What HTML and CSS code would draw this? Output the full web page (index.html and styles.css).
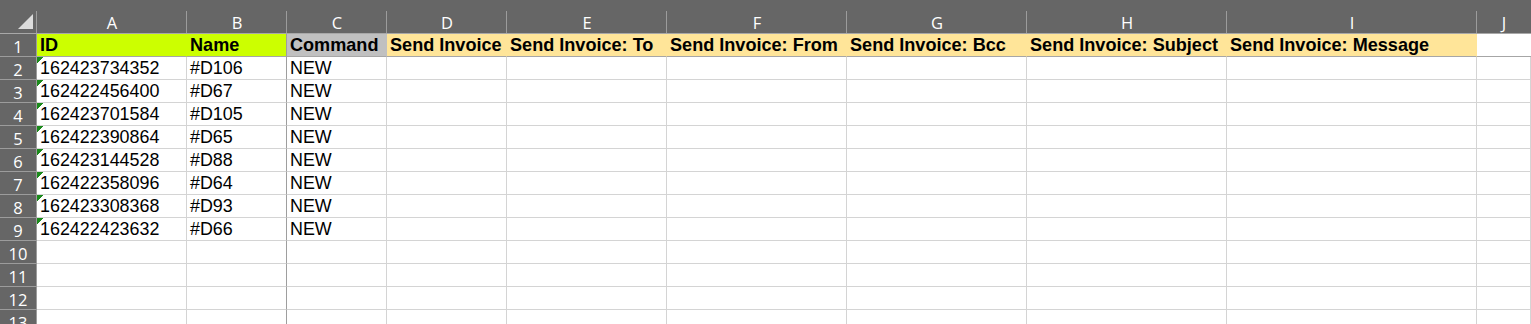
FILE: index.html
```html
<!DOCTYPE html>
<html>
<head>
<meta charset="utf-8">
<link rel="stylesheet" href="styles.css">
</head>
<body>
<div class="sheet">
  <div class="ch corner"><svg class="tri" width="16" height="16" viewBox="0 0 16 16"><polygon points="15,0 15,15 0,15" fill="#dcdcdc"/></svg></div>
  <div class="ch">A</div><div class="ch">B</div><div class="ch">C</div><div class="ch">D</div><div class="ch">E</div><div class="ch">F</div><div class="ch">G</div><div class="ch">H</div><div class="ch">I</div><div class="ch last">J</div>

  <div class="rh">1</div>
  <div class="c r1 b lime">ID</div><div class="c r1 b lime frz">Name</div><div class="c r1 b grey">Command</div>
  <div class="c r1 b tan">Send Invoice</div><div class="c r1 b tan">Send Invoice: To</div><div class="c r1 b tan">Send Invoice: From</div><div class="c r1 b tan">Send Invoice: Bcc</div><div class="c r1 b tan">Send Invoice: Subject</div><div class="c r1 b tan">Send Invoice: Message</div><div class="c r1 nr"></div>

  <div class="rh">2</div><div class="c flag">162423734352</div><div class="c frz">#D106</div><div class="c">NEW</div><div class="c"></div><div class="c"></div><div class="c"></div><div class="c"></div><div class="c"></div><div class="c"></div><div class="c"></div>
  <div class="rh">3</div><div class="c flag">162422456400</div><div class="c frz">#D67</div><div class="c">NEW</div><div class="c"></div><div class="c"></div><div class="c"></div><div class="c"></div><div class="c"></div><div class="c"></div><div class="c"></div>
  <div class="rh">4</div><div class="c flag">162423701584</div><div class="c frz">#D105</div><div class="c">NEW</div><div class="c"></div><div class="c"></div><div class="c"></div><div class="c"></div><div class="c"></div><div class="c"></div><div class="c"></div>
  <div class="rh">5</div><div class="c flag">162422390864</div><div class="c frz">#D65</div><div class="c">NEW</div><div class="c"></div><div class="c"></div><div class="c"></div><div class="c"></div><div class="c"></div><div class="c"></div><div class="c"></div>
  <div class="rh">6</div><div class="c flag">162423144528</div><div class="c frz">#D88</div><div class="c">NEW</div><div class="c"></div><div class="c"></div><div class="c"></div><div class="c"></div><div class="c"></div><div class="c"></div><div class="c"></div>
  <div class="rh">7</div><div class="c flag">162422358096</div><div class="c frz">#D64</div><div class="c">NEW</div><div class="c"></div><div class="c"></div><div class="c"></div><div class="c"></div><div class="c"></div><div class="c"></div><div class="c"></div>
  <div class="rh">8</div><div class="c flag">162423308368</div><div class="c frz">#D93</div><div class="c">NEW</div><div class="c"></div><div class="c"></div><div class="c"></div><div class="c"></div><div class="c"></div><div class="c"></div><div class="c"></div>
  <div class="rh">9</div><div class="c flag">162422423632</div><div class="c frz">#D66</div><div class="c">NEW</div><div class="c"></div><div class="c"></div><div class="c"></div><div class="c"></div><div class="c"></div><div class="c"></div><div class="c"></div>
  <div class="rh">10</div><div class="c"></div><div class="c frz"></div><div class="c"></div><div class="c"></div><div class="c"></div><div class="c"></div><div class="c"></div><div class="c"></div><div class="c"></div><div class="c"></div>
  <div class="rh">11</div><div class="c"></div><div class="c frz"></div><div class="c"></div><div class="c"></div><div class="c"></div><div class="c"></div><div class="c"></div><div class="c"></div><div class="c"></div><div class="c"></div>
  <div class="rh">12</div><div class="c"></div><div class="c frz"></div><div class="c"></div><div class="c"></div><div class="c"></div><div class="c"></div><div class="c"></div><div class="c"></div><div class="c"></div><div class="c"></div>
  <div class="rh">13</div><div class="c"></div><div class="c frz"></div><div class="c"></div><div class="c"></div><div class="c"></div><div class="c"></div><div class="c"></div><div class="c"></div><div class="c"></div><div class="c"></div>
</div>
</body>
</html>
```
FILE: styles.css
```css
html, body {
  margin: 0;
  padding: 0;
  background: #ffffff;
  overflow: hidden;
}
.sheet {
  display: grid;
  grid-template-columns: 37px 150px 100px 100px 120px 160px 180px 180px 200px 250px 1fr;
  grid-template-rows: 34px repeat(13, 23px);
  width: 1531px;
  height: 324px;
  overflow: hidden;
}
.ch {
  box-sizing: border-box;
  background: linear-gradient(#9c9c9c, #9c9c9c) right bottom / 1px 22px no-repeat, #666666;
  border-bottom: 1px solid #a8a8a8;
  color: #ffffff;
  font-family: "Open Sans", "Noto Sans", sans-serif;
  font-size: 16.5px;
  display: flex;
  align-items: center;
  justify-content: center;
  padding-top: 11px;
}
.ch.last {
  background: #666666;
}
.corner {
  justify-content: flex-end;
  align-items: flex-end;
  padding: 0 3px 3px 0;
}
.tri {
  display: block;
}
.rh {
  box-sizing: border-box;
  background: #666666;
  color: #ffffff;
  border-right: 1px solid #9c9c9c;
  border-bottom: 1px solid #9c9c9c;
  font-family: "Open Sans", "Noto Sans", sans-serif;
  font-size: 16.5px;
  display: flex;
  align-items: center;
  justify-content: center;
  padding-top: 2px;
}
.c {
  box-sizing: border-box;
  border-right: 1px solid #d4d4d4;
  border-bottom: 1px solid #d4d4d4;
  font-family: "Liberation Sans", Arial, sans-serif;
  font-size: 17.9px;
  line-height: 22px;
  color: #000000;
  padding-left: 3px;
  white-space: nowrap;
  overflow: hidden;
}
.c.b {
  font-weight: bold;
  font-size: 18.1px;
}
.c.r1 {
  border-bottom: 1px solid #a6a6a6;
}
.c.lime {
  background: #ccff00;
  border-right-color: #ccff00;
}
.c.lime.frz {
  border-right-color: #9e9e9e;
}
.c.grey {
  background: #c0c0c0;
  border-right-color: #c0c0c0;
}
.c.tan {
  background: #ffe599;
  border-right-color: #ffe599;
}
.c.nr {
  border-right: none;
}
.c.frz {
  border-right-color: #9e9e9e;
}
.c.flag {
  background: linear-gradient(135deg, #1b8a1b 0 4.3px, transparent 4.3px) left top / 6px 6px no-repeat;
}
```
